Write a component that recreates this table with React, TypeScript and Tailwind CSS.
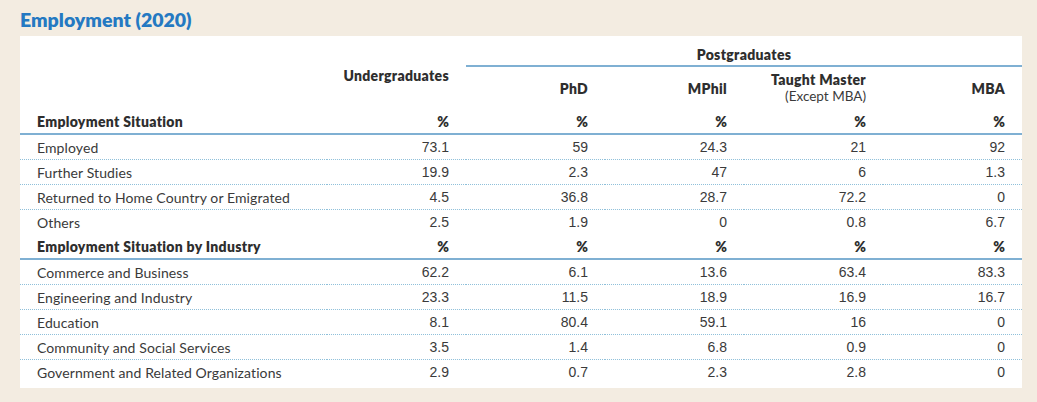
const situation = [
  { label: 'Employed', values: ['73.1', '59', '24.3', '21', '92'] },
  { label: 'Further Studies', values: ['19.9', '2.3', '47', '6', '1.3'] },
  { label: 'Returned to Home Country or Emigrated', values: ['4.5', '36.8', '28.7', '72.2', '0'] },
  { label: 'Others', values: ['2.5', '1.9', '0', '0.8', '6.7'] },
];

const industry = [
  { label: 'Commerce and Business', values: ['62.2', '6.1', '13.6', '63.4', '83.3'] },
  { label: 'Engineering and Industry', values: ['23.3', '11.5', '18.9', '16.9', '16.7'] },
  { label: 'Education', values: ['8.1', '80.4', '59.1', '16', '0'] },
  { label: 'Community and Social Services', values: ['3.5', '1.4', '6.8', '0.9', '0'] },
  { label: 'Government and Related Organizations', values: ['2.9', '0.7', '2.3', '2.8', '0'] },
];

type Row = { label: string; values: string[] };

function DataRows({ rows }: { rows: Row[] }) {
  return (
    <>
      {rows.map((row, i) => (
        <tr
          key={row.label}
          className={`h-[25px] ${i < rows.length - 1 ? 'border-b border-dotted border-[#8fc0da]' : ''}`}
        >
          <td className="pl-[17px] pt-[2px] text-[14px] tracking-[0.1px] text-[#3a3a3a]">{row.label}</td>
          {row.values.map((v, j) => (
            <td key={j} className="pr-[17px] pt-[1px] text-right font-['Liberation_Sans',Arial,sans-serif] text-[14px] text-[#3a3a3a]">
              {v}
            </td>
          ))}
        </tr>
      ))}
    </>
  );
}

function PercentRow({ label }: { label: string }) {
  return (
    <tr className="h-[25px] border-b-2 border-[#7fb0d3]">
      <td className="pl-[17px] pt-[1px] text-[14px] font-extrabold tracking-[0.3px] text-[#2e2e2e]">{label}</td>
      {[0, 1, 2, 3, 4].map((k) => (
        <td key={k} className="pr-[17px] pt-[1px] text-right text-[14px] font-extrabold text-[#2e2e2e]">
          %
        </td>
      ))}
    </tr>
  );
}

export default function App() {
  return (
    <div className="w-[1037px] h-[402px] bg-[#f3ece1] px-5 pt-[8px] font-['Lato',sans-serif]">
      <h2 className="text-[19.5px] font-extrabold leading-[24px] text-[#2479c2]">Employment (2020)</h2>
      <div className="mt-[4px] w-[1002px] bg-white pb-[4px]">
        <table className="w-full table-fixed border-collapse">
          <colgroup>
            <col className="w-[307px]" />
            <col className="w-[139px]" />
            <col className="w-[139px]" />
            <col className="w-[139px]" />
            <col className="w-[139px]" />
            <col className="w-[139px]" />
          </colgroup>
          <thead>
            <tr className="h-[30px]">
              <th rowSpan={2}></th>
              <th rowSpan={2} className="pr-[17px] pt-[6px] text-right align-middle text-[14px] font-extrabold tracking-[0.3px] text-[#2e2e2e]">
                Undergraduates
              </th>
              <th colSpan={4} className="border-b-2 border-[#7fb0d3] pt-[8px] text-center align-middle text-[14px] font-extrabold tracking-[0.3px] text-[#2e2e2e]">
                Postgraduates
              </th>
            </tr>
            <tr className="h-[43px]">
              <th className="pr-[17px] text-right align-middle text-[14px] font-extrabold tracking-[0.3px] text-[#2e2e2e]">PhD</th>
              <th className="pr-[17px] text-right align-middle text-[14px] font-extrabold tracking-[0.3px] text-[#2e2e2e]">MPhil</th>
              <th className="pr-[17px] text-right align-middle text-[14px] font-extrabold leading-[17px] tracking-[0.3px] text-[#2e2e2e]">
                Taught Master
                <div className="text-[13.5px] font-normal tracking-normal text-[#3a3a3a]">(Except MBA)</div>
              </th>
              <th className="pr-[17px] text-right align-middle text-[14px] font-extrabold tracking-[0.3px] text-[#2e2e2e]">MBA</th>
            </tr>
          </thead>
          <tbody>
            <PercentRow label="Employment Situation" />
            <DataRows rows={situation} />
            <PercentRow label="Employment Situation by Industry" />
            <DataRows rows={industry} />
          </tbody>
        </table>
      </div>
    </div>
  );
}
